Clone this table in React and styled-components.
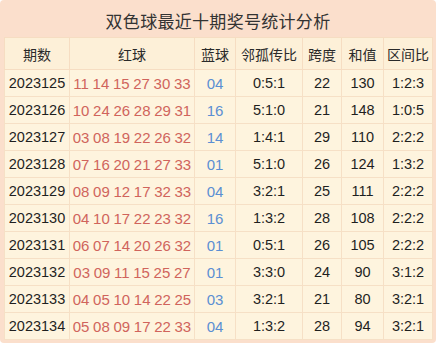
import React from 'react';
import styled, { createGlobalStyle } from 'styled-components';

const GlobalStyle = createGlobalStyle`
	html, body {
		margin: 0;
		padding: 0;
		background: #ffffff;
	}
	body {
		font-family: "Liberation Sans", Arial, "Noto Sans CJK SC", sans-serif;
	}
`;

const Frame = styled.div`
	width: 436px;
	height: 343px;
	box-sizing: border-box;
	background: #fbdfcc;
	border-radius: 4px;
	padding: 0 4px 3px;
	display: flex;
	flex-direction: column;
`;

const Title = styled.div`
	height: 38px;
	padding-top: 3px;
	box-sizing: border-box;
	display: flex;
	align-items: center;
	justify-content: center;
	font-family: "Noto Sans CJK SC", sans-serif;
	font-size: 17px;
	color: #333333;
	letter-spacing: 0.3px;
`;

const Table = styled.table`
	width: 428px;
	border-collapse: collapse;
	table-layout: fixed;
	background: #fef4de;
`;

const HeadCell = styled.th`
	height: 31px;
	padding: 0;
	font-weight: normal;
	font-family: "Noto Sans CJK SC", sans-serif;
	font-size: 14px;
	color: #2a2a2a;
	background: #fdf0d8;
	border: 1px solid #f6ddc2;
	text-align: center;
`;

const Cell = styled.td`
	height: 26px;
	padding: 0;
	font-size: ${p => p.tone ? '15px' : '14.5px'};
	text-align: center;
	border: 1px solid #f6e0c6;
	white-space: nowrap;
	color: ${p => p.tone === 'red' ? '#d0645c' : p.tone === 'blue' ? '#5b8fd3' : '#1f1f1f'};
	word-spacing: ${p => p.tone === 'red' ? '-0.5px' : '0'};
`;

const columns = [
	{ label: '期数', width: 65 },
	{ label: '红球', width: 125 },
	{ label: '蓝球', width: 41 },
	{ label: '邻孤传比', width: 67 },
	{ label: '跨度', width: 39 },
	{ label: '和值', width: 42 },
	{ label: '区间比', width: 49 },
];

const rows = [
	['2023125', '11 14 15 27 30 33', '04', '0:5:1', '22', '130', '1:2:3'],
	['2023126', '10 24 26 28 29 31', '16', '5:1:0', '21', '148', '1:0:5'],
	['2023127', '03 08 19 22 26 32', '14', '1:4:1', '29', '110', '2:2:2'],
	['2023128', '07 16 20 21 27 33', '01', '5:1:0', '26', '124', '1:3:2'],
	['2023129', '08 09 12 17 32 33', '04', '3:2:1', '25', '111', '2:2:2'],
	['2023130', '04 10 17 22 23 32', '16', '1:3:2', '28', '108', '2:2:2'],
	['2023131', '06 07 14 20 26 32', '01', '0:5:1', '26', '105', '2:2:2'],
	['2023132', '03 09 11 15 25 27', '01', '3:3:0', '24', '90', '3:1:2'],
	['2023133', '04 05 10 14 22 25', '03', '3:2:1', '21', '80', '3:2:1'],
	['2023134', '05 08 09 17 22 33', '04', '1:3:2', '28', '94', '3:2:1'],
];

const tones = [null, 'red', 'blue', null, null, null, null];

export default function App() {
	return (
		<>
			<GlobalStyle />
			<Frame>
				<Title>双色球最近十期奖号统计分析</Title>
				<Table>
					<colgroup>
						{columns.map(c => <col key={c.label} style={{ width: c.width }} />)}
					</colgroup>
					<thead>
						<tr>
							{columns.map(c => <HeadCell key={c.label}>{c.label}</HeadCell>)}
						</tr>
					</thead>
					<tbody>
						{rows.map(row => (
							<tr key={row[0]}>
								{row.map((v, i) => <Cell key={i} tone={tones[i]}>{v}</Cell>)}
							</tr>
						))}
					</tbody>
				</Table>
			</Frame>
		</>
	);
}
